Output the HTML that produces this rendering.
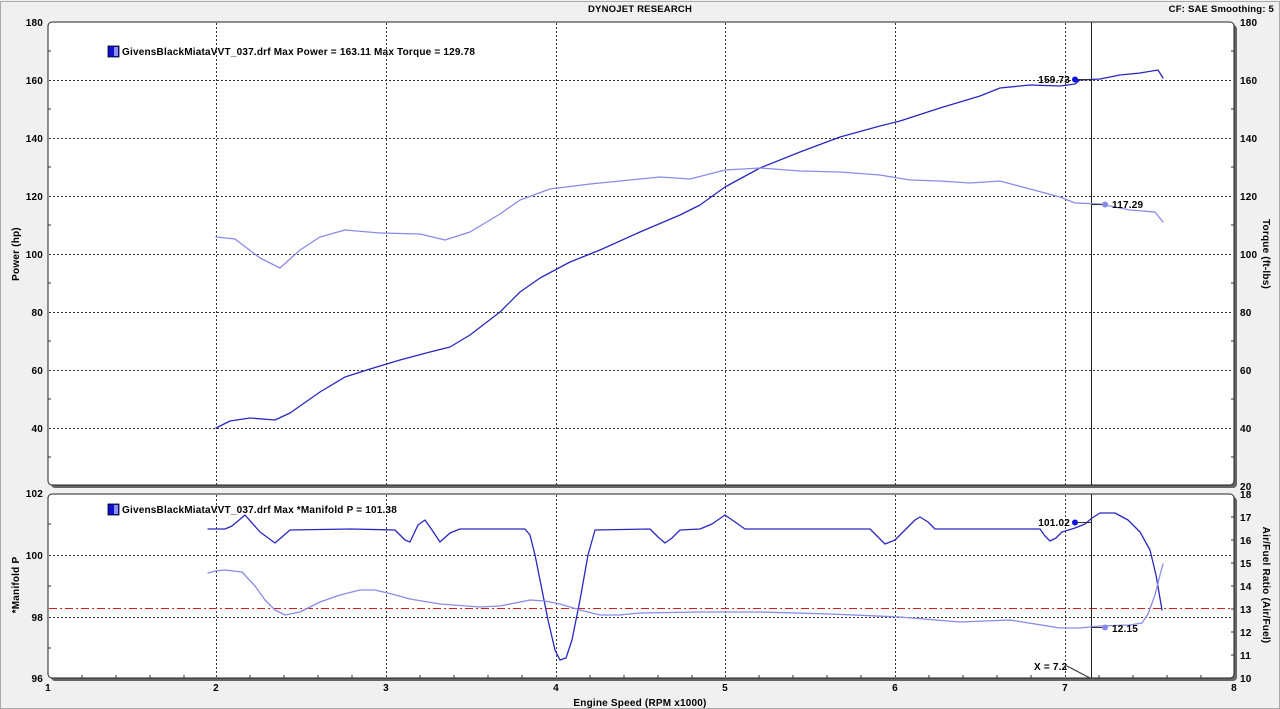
<!DOCTYPE html>
<html><head><meta charset="utf-8"><style>
html,body{margin:0;padding:0;background:#f0f0f0;}
svg{display:block;font-family:"Liberation Sans",sans-serif;font-weight:bold;font-size:10px;letter-spacing:0.2px;}
</style></head><body>
<svg width="1280" height="709" viewBox="0 0 1280 709" xmlns="http://www.w3.org/2000/svg">
<rect x="0" y="0" width="1280" height="709" fill="#f0f0f0"/>
<rect x="0.5" y="1.5" width="1279" height="707" fill="none" stroke="#aaa"/>
<text x="640" y="12" text-anchor="middle" font-size="9.5">DYNOJET RESEARCH</text>
<text x="1274" y="12" text-anchor="end" font-size="9.5">CF: SAE  Smoothing: 5</text>

<rect x="51" y="25" width="1186" height="463" rx="4" fill="#666"/>
<rect x="48" y="22" width="1186" height="463" rx="4" fill="#fff" stroke="#222" stroke-width="1"/>
<rect x="51" y="497" width="1186" height="184" rx="4" fill="#666"/>
<rect x="48" y="494" width="1186" height="184" rx="4" fill="#fff" stroke="#222" stroke-width="1"/>

<g stroke="#333" stroke-width="1" stroke-dasharray="2,2" fill="none">
<path d="M216.5 23V485M386.5 23V485M556.5 23V485M725.5 23V485M895.5 23V485M1065.5 23V485"/>
<path d="M49 80.5H1233M49 138.5H1233M49 196.5H1233M49 254.5H1233M49 312.5H1233M49 370.5H1233M49 428.5H1233"/>
<path d="M216.5 495V678M386.5 495V678M556.5 495V678M725.5 495V678M895.5 495V678M1065.5 495V678"/>
<path d="M49 555.5H1233M49 617.5H1233"/>
</g>
<path d="M49 608.5H1233" stroke="#d02020" stroke-width="1" stroke-dasharray="8,3,2,3"/>
<path d="M1091.5 22V485M1091.5 494V678" stroke="#222" stroke-width="1"/>

<g stroke="#333">
<path d="M48 51h3M48 109h3M48 167h3M48 225h3M48 283h3M48 341h3M48 399h3M48 457h3"/>
<path d="M1231 51h3M1231 109h3M1231 167h3M1231 225h3M1231 283h3M1231 341h3M1231 399h3M1231 457h3"/>
<path d="M48 524h3M48 586h3M48 648h3"/>
<path d="M1231 517h3M1231 540h3M1231 563h3M1231 586h3M1231 609h3M1231 632h3M1231 655h3"/>
<path d="M82 678v-3M116 678v-3M150 678v-3M184 678v-3M250 678v-3M284 678v-3M318 678v-3M352 678v-3M420 678v-3M454 678v-3M488 678v-3M522 678v-3M590 678v-3M624 678v-3M658 678v-3M692 678v-3M759 678v-3M793 678v-3M827 678v-3M861 678v-3M929 678v-3M963 678v-3M997 678v-3M1031 678v-3M1099 678v-3M1133 678v-3M1167 678v-3M1201 678v-3"/>
</g>

<g text-anchor="end">
<text x="43" y="26">180</text><text x="43" y="84">160</text><text x="43" y="142">140</text><text x="43" y="200">120</text><text x="43" y="258">100</text><text x="43" y="316">80</text><text x="43" y="374">60</text><text x="43" y="432">40</text>
<text x="43" y="497">102</text><text x="43" y="559">100</text><text x="43" y="621">98</text><text x="43" y="682">96</text>
</g>
<g text-anchor="start">
<text x="1240" y="26">180</text><text x="1240" y="84">160</text><text x="1240" y="142">140</text><text x="1240" y="200">120</text><text x="1240" y="258">100</text><text x="1240" y="316">80</text><text x="1240" y="374">60</text><text x="1240" y="432">40</text><text x="1240" y="490">20</text>
<text x="1240" y="498">18</text><text x="1240" y="521">17</text><text x="1240" y="544">16</text><text x="1240" y="567">15</text><text x="1240" y="590">14</text><text x="1240" y="613">13</text><text x="1240" y="636">12</text><text x="1240" y="659">11</text><text x="1240" y="682">10</text>
</g>
<g text-anchor="middle">
<text x="48" y="691">1</text><text x="216" y="691">2</text><text x="386" y="691">3</text><text x="556" y="691">4</text><text x="725" y="691">5</text><text x="895" y="691">6</text><text x="1065" y="691">7</text><text x="1234" y="691">8</text>
<text x="640" y="706">Engine Speed (RPM x1000)</text>
</g>
<text transform="translate(19,254) rotate(-90)" text-anchor="middle">Power (hp)</text>
<text transform="translate(19,585) rotate(-90)" text-anchor="middle">*Manifold P</text>
<text transform="translate(1263,254) rotate(90)" text-anchor="middle">Torque (ft-lbs)</text>
<text transform="translate(1263,585) rotate(90)" text-anchor="middle">Air/Fuel Ratio (Air/Fuel)</text>

<rect x="108" y="46" width="11" height="11" fill="#1010d0" stroke="#000" stroke-width="0.8"/><rect x="114" y="47" width="4" height="9" fill="#9090f0"/>
<text x="122" y="55">GivensBlackMiataVVT_037.drf Max Power = 163.11 Max Torque = 129.78</text>
<rect x="108" y="504" width="11" height="11" fill="#1010d0" stroke="#000" stroke-width="0.8"/><rect x="114" y="505" width="4" height="9" fill="#9090f0"/>
<text x="122" y="513">GivensBlackMiataVVT_037.drf Max *Manifold P = 101.38</text>

<g fill="none" stroke-linejoin="round" stroke-linecap="round">
<polyline stroke="#2828c0" stroke-width="1.3" points="216,428 230,421 250,418 275,420 290,413 320,392 345,377 370,369 400,360 430,352 450,347 470,335 500,312 520,292 540,278 570,262 600,250 640,232 680,215 700,205 725,187 760,168 800,152 840,137 880,126 900,121 940,108 980,96 1000,88 1030,85 1060,86 1075,84 1080,80 1100,79 1120,75 1140,73 1158,70 1163,78"/>
<polyline stroke="#8a8ae8" stroke-width="1.3" points="216,237 235,239 260,258 280,268 300,250 320,237 345,230 380,233 420,234 445,240 470,232 500,214 520,200 550,189 590,184 620,181 660,177 690,179 725,170 760,168 800,171 840,172 880,175 910,180 940,181 970,183 1000,181 1030,189 1060,197 1075,203 1100,204 1130,210 1155,212 1163,222"/>
<polyline stroke="#2828c0" stroke-width="1.3" points="208,529 225,529 232,526 245,515 260,532 275,543 290,530 350,529 395,530 405,540 410,542 418,525 425,520 432,530 440,542 450,533 460,529 525,529 530,535 535,555 542,590 548,620 555,650 560,660 566,658 572,640 580,600 588,555 595,530 650,529 658,537 665,543 672,538 680,530 700,529 712,524 725,515 735,522 745,529 870,529 878,537 885,544 895,540 905,530 915,520 920,517 928,522 935,529 1040,529 1045,536 1050,541 1056,538 1062,532 1075,528 1085,524 1092,518 1100,513 1115,513 1128,520 1140,532 1150,550 1156,575 1162,610"/>
<polyline stroke="#8a8ae8" stroke-width="1.3" points="208,573 215,571 225,570 242,572 255,586 265,600 275,610 285,615 300,612 320,602 340,595 360,590 375,590 392,594 410,599 440,604 480,607 500,606 530,600 545,601 560,604 580,610 600,615 620,615 640,613 700,612 760,612 830,614 900,617 960,622 1010,620 1060,628 1080,628 1100,626 1130,625 1142,623 1148,614 1155,595 1160,575 1163,564"/>
</g>

<path d="M1075 79.5H1091" stroke="#333"/><circle cx="1075" cy="79.5" r="3" fill="#1010e0"/>
<text x="1070" y="83" text-anchor="end">159.73</text>
<path d="M1091 204.5H1105" stroke="#333"/><circle cx="1105" cy="204.5" r="3" fill="#8888f0"/>
<text x="1112" y="208">117.29</text>
<path d="M1075 522.5H1091" stroke="#333"/><circle cx="1075" cy="522.5" r="3" fill="#1010e0"/>
<text x="1070" y="526" text-anchor="end">101.02</text>
<path d="M1091 627.5H1105" stroke="#333"/><circle cx="1105" cy="627.5" r="3" fill="#8888f0"/>
<text x="1112" y="632">12.15</text>
<text x="1034" y="670">X = 7.2</text>
<path d="M1067 666L1090 678" stroke="#333"/>
</svg>
</body></html>
